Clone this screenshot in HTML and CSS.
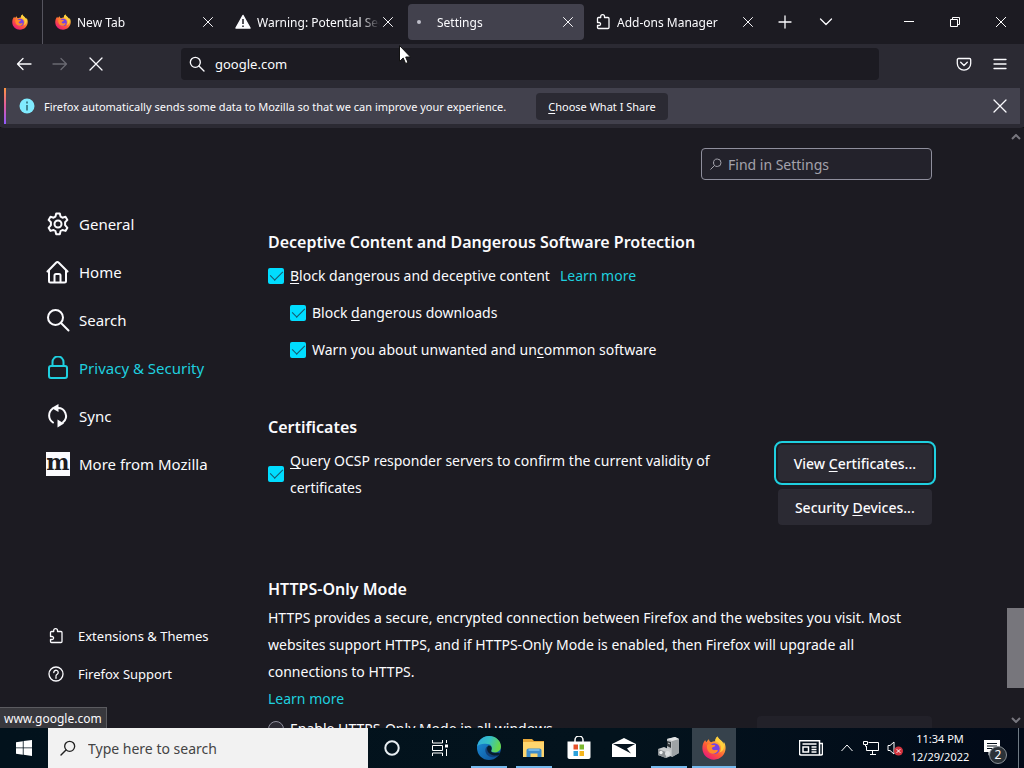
FILE: index.html
```html
<!DOCTYPE html>
<html lang="en">
<head>
    <meta charset="UTF-8">
    <title>Settings</title>
    <link rel="stylesheet" href="styles.css">
</head>
<body>
    <!-- shared icons -->
    <svg class="sprite" aria-hidden="true">
        <defs>
            <linearGradient id="fire" x1="0.85" y1="0.05" x2="0.2" y2="0.95">
                <stop offset="0" stop-color="#fff44f"/>
                <stop offset="0.3" stop-color="#ffa436"/>
                <stop offset="0.6" stop-color="#ff5a36"/>
                <stop offset="1" stop-color="#e8187c"/>
            </linearGradient>
            <linearGradient id="edgeTop" x1="0" y1="0" x2="1" y2="0.3">
                <stop offset="0" stop-color="#2fa8e0"/>
                <stop offset="0.55" stop-color="#35c1c4"/>
                <stop offset="1" stop-color="#66d64c"/>
            </linearGradient>
            <linearGradient id="edgeBottom" x1="0" y1="0" x2="1" y2="1">
                <stop offset="0" stop-color="#1c93dc"/>
                <stop offset="1" stop-color="#0c4a92"/>
            </linearGradient>
        </defs>
        <symbol id="firefox" viewBox="0 0 24 24">
            <path fill="url(#fire)" d="M15.600 .6c-1.800 1.300-2.400 3.200-2.300 4.600-1.500-.1-3 .3-4.200 1.100C8 5.800 7 4.900 7 3.300 5.800 3.900 5 5 4.700 6.100 3.900 5.700 3.400 4.900 3.300 4 1.300 6 .2 9.300.4 12.800.7 19 5.700 23.700 12 23.700c6.500 0 11.600-5.200 11.600-11.600 0-2.600-.7-4.700-1.900-6.400 0 .9-.1 1.500-.3 2-.9-3.100-4.600-4-5.800-7.100z"/>
            <circle cx="12.300" cy="12.600" r="5.400" fill="#7542e5"/>
            <path fill="#ff8a2b" d="M5.100 8.700c1.600-1 3.700-.8 5 .3h3c.4.900-.5 1.800-1.800 2.100-.8.200-1.300.8-1.400 1.500.5 1.300 1.900 1.900 3.300 1.500 1.400-.4 2.600-.2 2.900.5-1.100 2.200-3.400 3.500-5.900 3.100-3.600-.6-6-4.700-5.100-9z"/>
            <path fill="#ffcf3d" d="M15.600.6c-1.800 1.300-2.400 3.200-2.300 4.600 2.700.5 5.200 2.300 5.700 5.300.4 2.500-.3 4.700-1.700 6.300 2.800-1 4.500-3.200 4.800-6.300.2-4.100-5.300-5.500-6.500-9.900z"/>
        </symbol>
        <symbol id="close" viewBox="0 0 16 16">
            <path d="M2 2l12 12M14 2L2 14"/>
        </symbol>
        <symbol id="magnifier" viewBox="0 0 24 24">
            <circle cx="9.500" cy="9.500" r="7.500"/>
            <path d="M15 15l7.500 7.500"/>
        </symbol>
        <symbol id="puzzle" viewBox="0 0 16 16">
            <path d="M2.500 5.700V4.500c0-.6.400-1 1-1h2.200V2.600a1.900 1.900 0 0 1 3.800 0v.9H13c.6 0 1 .4 1 1v9c0 .6-.4 1-1 1H3.500c-.6 0-1-.4-1-1v-2h1.600a1.500 1.500 0 0 0 0-3H2.500z"/>
        </symbol>
    </svg>

    <header class="tab-strip">
        <button class="pinned-tab" aria-label="Firefox View"><svg class="tab-icon"><use href="#firefox"/></svg></button>
        <div class="tabs">
            <div class="tab">
                <svg class="tab-icon"><use href="#firefox"/></svg>
                <span class="tab-label">New Tab</span>
                <button class="tab-close" aria-label="Close tab"><svg class="line"><use href="#close"/></svg></button>
            </div>
            <div class="tab">
                <svg class="tab-icon" viewBox="0 0 16 16"><path d="M8 1.500L15 14H1z" fill="#fbfbfe" stroke="#fbfbfe" stroke-width="1.500" stroke-linejoin="round"/><path d="M8 5v5M8 11.500v1.500" stroke="#1c1b22" stroke-width="1.500"/></svg>
                <span class="tab-label">Warning: Potential Secu</span>
                <button class="tab-close" aria-label="Close tab"><svg class="line"><use href="#close"/></svg></button>
            </div>
            <div class="tab active">
                <svg class="tab-icon" viewBox="0 0 16 16"><circle cx="4" cy="8" r="2" fill="#bfbfc9"/></svg>
                <span class="tab-label">Settings</span>
                <button class="tab-close" aria-label="Close tab"><svg class="line"><use href="#close"/></svg></button>
            </div>
            <div class="tab">
                <svg class="tab-icon line"><use href="#puzzle"/></svg>
                <span class="tab-label">Add-ons Manager</span>
                <button class="tab-close" aria-label="Close tab"><svg class="line"><use href="#close"/></svg></button>
            </div>
        </div>
        <button class="tool" aria-label="New tab"><svg class="line" viewBox="0 0 16 16"><path d="M8 2v12M2 8h12"/></svg></button>
        <button class="tool" aria-label="List all tabs"><svg class="line" viewBox="0 0 16 16"><path d="M2.500 5L8 10.500 13.500 5"/></svg></button>
        <div class="window-controls">
            <button aria-label="Minimize"><svg class="thin" viewBox="0 0 12 12"><path d="M1 5.500h10"/></svg></button>
            <button aria-label="Restore"><svg class="thin" viewBox="0 0 12 12"><path d="M1.500 3.500h7v7h-7zM3.500 3.500v-2h7v7h-2"/></svg></button>
            <button aria-label="Close"><svg class="thin" viewBox="0 0 12 12"><path d="M1 1l10 10M11 1L1 11"/></svg></button>
        </div>
    </header>

    <nav class="nav-bar">
        <button class="tool" aria-label="Back"><svg class="line" viewBox="0 0 16 16"><path d="M15 8H2M7 2.500L1.500 8 7 13.500"/></svg></button>
        <button class="tool dim" aria-label="Forward"><svg class="line" viewBox="0 0 16 16"><path d="M1 8h13M9 2.500L14.500 8 9 13.500"/></svg></button>
        <button class="tool" aria-label="Stop"><svg class="line"><use href="#close"/></svg></button>
        <div class="url-bar">
            <svg class="line"><use href="#magnifier"/></svg>
            <input type="text" aria-label="Address" value="google.com">
        </div>
        <button class="tool" aria-label="Save to Pocket"><svg class="line" viewBox="0 0 16 16"><path d="M2.500 2.500h11c.7 0 1.200.5 1.200 1.200V7.500a6.700 6.700 0 0 1-13.400 0V3.700c0-.7.500-1.200 1.200-1.200zM4.700 6.300L8 9.500l3.300-3.200"/></svg></button>
        <button class="tool" aria-label="Menu"><svg class="line" viewBox="0 0 16 16"><path d="M2 3.500h12M2 8h12M2 12.500h12"/></svg></button>
    </nav>

    <div class="info-bar">
        <svg class="info-icon" viewBox="0 0 16 16"><circle cx="8" cy="8" r="7.500" fill="#80ebff"/><path d="M8 3.500v2M8 7v5.500" stroke="#2b6571" stroke-width="1.500"/></svg>
        <span>Firefox automatically sends some data to Mozilla so that we can improve your experience.</span>
        <button class="share"><span><u>C</u>hoose What I Share</span></button>
        <button class="tool dismiss" aria-label="Dismiss"><svg class="line"><use href="#close"/></svg></button>
    </div>

    <div class="page">
        <aside class="sidebar">
            <ul class="categories">
                <li><a href="#general">
                    <svg class="line" viewBox="0 0 24 24"><path d="M10.200 1.500h3.600l.8 3.200 1.800 1 3.100-.9 1.900 3.100-2.300 2.400v2.900l2.300 2.600-1.900 3.100-3.100-.9-1.800 1-.8 3.300h-3.600l-.8-3.300-1.800-1-3.100.9-1.900-3.100 2.300-2.600v-2.900L2.600 7.900l1.900-3.100 3.100.9 1.800-1z"/><circle cx="12" cy="12" r="3.500"/></svg>
                    General</a></li>
                <li><a href="#home">
                    <svg class="line" viewBox="0 0 24 24"><path d="M1.500 11.500L10 2.700a2 2 0 0 1 2.800 0l8.700 8.800M3 10.500V21c0 .8.700 1.500 1.500 1.500h14c.8 0 1.500-.7 1.500-1.500V10.500M8.500 22v-6.500c0-.8.700-1.500 1.500-1.500h3c.8 0 1.500.7 1.500 1.500V22"/></svg>
                    Home</a></li>
                <li><a href="#search">
                    <svg class="line"><use href="#magnifier"/></svg>
                    Search</a></li>
                <li><a class="selected" href="#privacy">
                    <svg class="line" viewBox="0 0 24 24"><rect x="3" y="10" width="18" height="12" rx="2"/><path d="M6.500 10V6a5.500 5.500 0 0 1 11 0v4"/></svg>
                    Privacy &amp; Security</a></li>
                <li><a href="#sync">
                    <svg class="line" viewBox="0 0 24 24"><path d="M6.500 4.800A8.300 8.300 0 0 0 7 18.500M11.500 4a8 8 0 0 1 5.500 14.200"/><path d="M12.500 0v8L5.500 4zM11.500 15.500v8l6.500-4z" fill="currentColor" stroke="none"/></svg>
                    Sync</a></li>
                <li><a href="#more">
                    <svg viewBox="0 0 24 24"><path fill="#fbfbfe" d="M0 0h24v24H0z"/><text class="mozilla-m" x="12" y="18" text-anchor="middle">m</text></svg>
                    More from Mozilla</a></li>
            </ul>
            <ul class="footer-links">
                <li><a href="#addons"><svg class="line"><use href="#puzzle"/></svg>Extensions &amp; Themes</a></li>
                <li><a href="#support"><svg class="line" viewBox="0 0 16 16"><circle cx="8" cy="8" r="7"/><path d="M5.800 6.500a2.200 2.200 0 1 1 3.400 1.800c-.8.500-1.200.8-1.200 1.700M8 11v1.300"/></svg>Firefox Support</a></li>
            </ul>
        </aside>

        <main class="content">
            <div class="find">
                <svg class="line"><use href="#magnifier"/></svg>
                <input type="search" aria-label="Find in Settings" placeholder="Find in Settings">
            </div>

            <section>
                <h2>Deceptive Content and Dangerous Software Protection</h2>
                <div class="option">
                    <input type="checkbox" id="block-content" checked>
                    <label for="block-content"><u>B</u>lock dangerous and deceptive content</label>
                    <a class="learn" href="#learn-deceptive">Learn more</a>
                </div>
                <div class="option indent">
                    <input type="checkbox" id="block-downloads" checked>
                    <label for="block-downloads">Block <u>d</u>angerous downloads</label>
                </div>
                <div class="option indent">
                    <input type="checkbox" id="warn-software" checked>
                    <label for="warn-software">Warn you about unwanted and un<u>c</u>ommon software</label>
                </div>
            </section>

            <section>
                <h2>Certificates</h2>
                <div class="certificates">
                    <div class="option">
                        <input type="checkbox" id="ocsp" checked>
                        <label for="ocsp"><u>Q</u>uery OCSP responder servers to confirm the current validity of certificates</label>
                    </div>
                    <div class="cert-buttons">
                        <button class="focused"><span>View <u>C</u>ertificates...</span></button>
                        <button><span>Security <u>D</u>evices...</span></button>
                    </div>
                </div>
            </section>

            <section>
                <h2>HTTPS-Only Mode</h2>
                <p>HTTPS provides a secure, encrypted connection between Firefox and the websites you visit. Most websites support HTTPS, and if HTTPS-Only Mode is enabled, then Firefox will upgrade all connections to HTTPS.</p>
                <a href="#learn-https">Learn more</a>
                <div class="https-row">
                    <div class="option">
                        <input type="radio" name="https-only" id="https-all">
                        <label for="https-all">Enable HTTPS-Only Mode in all windows</label>
                    </div>
                    <button class="exceptions" aria-label="Manage Exceptions" disabled></button>
                </div>
            </section>
        </main>

        <div class="scrollbar">
            <svg viewBox="0 0 10 6"><path d="M1 5l4-4 4 4"/></svg>
            <div class="thumb"></div>
            <svg viewBox="0 0 10 6"><path d="M1 1l4 4 4-4"/></svg>
        </div>

        <div class="status">www.google.com</div>
    </div>

    <footer class="taskbar">
        <button class="start" aria-label="Start"><svg viewBox="0 0 16 16"><path fill="#fff" d="M0 2.200l6.800-1v6.300H0zM7.600 1.100L16 0v7.500H7.600zM0 8.300h6.800v6.400L0 13.800zM7.600 8.300H16V16l-8.400-1.200z"/></svg></button>
        <div class="task-search">
            <svg class="line"><use href="#magnifier"/></svg>
            <input type="text" aria-label="Search" placeholder="Type here to search">
        </div>
        <button class="start" aria-label="Cortana"><svg viewBox="0 0 16 16"><circle cx="8" cy="8" r="6.700" fill="none" stroke="#e8eef2" stroke-width="2"/></svg></button>
        <button class="start" aria-label="Task View"><svg viewBox="0 0 16 16"><path d="M.5 0v3h10V0M.5 16v-3h10v3M.5 5.500h10v5H.5zM14.500 0v3M14.500 9v7" fill="none" stroke="#fff"/><path d="M13 4.500h3v3h-3z" fill="#fff"/></svg></button>
        <div class="apps">
            <button class="running" aria-label="Microsoft Edge">
                <svg viewBox="0 0 24 24"><circle cx="12" cy="12" r="12" fill="url(#edgeBottom)"/><path fill="url(#edgeTop)" d="M.2 10.500C1 4.500 6 0 12 0c7 0 12 5 12 10.500 0 3.600-2.900 6-6.200 6-2.600 0-4-1-3.600-1.900 1.600-2 .8-6.300-3.700-6.600C6 7.200 2 8 .2 10.500z"/><path fill="#123f79" d="M10 10.500c-2.800 2.500-2 8 2.500 10 3.500 1.400 7.500.5 10-2-4.500 1.800-11 .5-12.500-8z"/><path fill="#071d2e" d="M12 9.500c2.500 0 3.300 3 2.300 4.800-.8 1.300.8 2.700 3.800 2.400h5c-.4 1.200-1 2-1.700 2.500-4 1.200-10.300-.5-11.300-5.700-.3-1.800.4-4 1.900-4z"/></svg>
            </button>
            <button class="running" aria-label="File Explorer">
                <svg viewBox="0 0 24 24"><path fill="#e9a93a" d="M1 3h9l2 2h10v4H1z"/><path fill="#ffd66e" d="M1 6h21v15H1z"/><path fill="#3f8dcb" d="M4.500 21v-6.500c0-1.200.8-2 2-2h11c1.200 0 2 .8 2 2V21h-4v-3.500h-7V21z"/><path fill="#75b8e6" d="M6.500 13h11v2h-11z"/></svg>
            </button>
            <button aria-label="Microsoft Store">
                <svg viewBox="0 0 24 24"><path d="M8 6V4a4 4 0 0 1 8 0v2" fill="none" stroke="#fff" stroke-width="1.500"/><path fill="#fff" d="M.5 5.500h23V21c0 1.200-.8 2-2 2h-19c-1.200 0-2-.8-2-2z"/><path fill="#e5512b" d="M6.500 8.500H11v5H6.500z"/><path fill="#7cb82f" d="M12.500 8.500H17v5h-4.500z"/><path fill="#2ba1dc" d="M6.500 15H11v5H6.500z"/><path fill="#f5b51d" d="M12.500 15H17v5h-4.500z"/></svg>
            </button>
            <button aria-label="Mail">
                <svg viewBox="0 0 24 24"><path fill="#fff" d="M0 8l12-6 12 6v13H0z"/><path fill="#06141f" d="M1 8h22l-8 4.500 4 5z"/></svg>
            </button>
            <button class="running" aria-label="Tools">
                <svg viewBox="0 0 24 24"><path fill="#b9bdc0" d="M10 3l8-2 4 2v14l-7 4-5-3z"/><path fill="#9ea3a6" d="M15 5l7-2v14l-7 4z"/><path fill="#e2e4e5" d="M10 3l8-2 4 2-7 2z"/><path fill="#33383b" d="M10 5l4 1v6l-4-2z"/><path d="M11 7l2 1" stroke="#c9cccd"/><path fill="#c9cccd" d="M1 13l6-2 7 3v6l-5 2-8-3z"/><path fill="#8b9093" d="M1 13l8 3v6l-8-3z"/><circle cx="4" cy="16.500" r="1.700" fill="#eef0f0"/><circle cx="10.500" cy="17.500" r="2.500" fill="#dcdfe0"/></svg>
            </button>
            <button class="running current" aria-label="Firefox"><svg><use href="#firefox"/></svg></button>
        </div>
        <div class="tray">
            <button class="news" aria-label="News"><svg class="tray-line" viewBox="0 0 24 16"><path d="M20.500 3.500h3v10c0 .8-.7 1.500-1.500 1.500H2c-.8 0-1.500-.7-1.500-1.500V.8h20v13.500M3.500 4h14M12.500 7h5M12.500 9.500h5M12.500 12h5M4 7h5.500v5H4z" stroke-width="1.500"/></svg></button>
            <button aria-label="Show hidden icons"><svg class="tray-line" viewBox="0 0 16 16"><path d="M2.500 11L8 5l5.500 6"/></svg></button>
            <button aria-label="Network"><svg class="tray-line" viewBox="0 0 16 16"><path d="M5.500 2.500h10v8h-12V6M7 14.500h6M9.500 10.500v4M.5 1.500h4v3h-4zM2.500 4.500v2"/></svg></button>
            <button aria-label="Volume"><svg class="tray-line" viewBox="0 0 16 16"><path d="M1 5.500h2L7 2v12l-4-3.500H1z"/><circle cx="11.500" cy="11" r="4.500" fill="#d4343f" stroke="none"/><path d="M9.700 9.200l3.600 3.600M13.300 9.200l-3.600 3.600"/></svg></button>
            <div class="clock"><span>11:34 PM</span><span>12/29/2022</span></div>
            <button class="notifications" aria-label="Notifications">
                <svg viewBox="0 0 16 16"><path fill="#fff" d="M0 0h16v12H8l-3.500 3.500V12H0z"/><path d="M3 3.500h10M3 6h10M3 8.500h6" stroke="#04101b"/></svg>
                <span class="badge">2</span>
            </button>
        </div>
    </footer>

    <svg class="cursor" viewBox="0 0 12 19"><path d="M.5.5v16l3.700-3.500 2.400 5.500 2.400-1-2.300-5.500h4.800z" fill="#fff" stroke="#111"/></svg>
</body>
</html>
```

FILE: styles.css
```css
* {
    box-sizing: border-box;
}

body {
    margin: 0;
    height: 100vh;
    display: flex;
    flex-direction: column;
    overflow: hidden;
    background-color: #1c1b22;
    color: #fbfbfe;
    font-family: "Segoe UI", "Noto Sans", sans-serif;
    font-size: 14px;
}

button,
input {
    font: inherit;
    color: inherit;
}

button {
    display: flex;
    justify-content: center;
    align-items: center;
    padding: 0;
    border: none;
    background: none;
}

input {
    min-width: 0;
    padding: 0;
    border: none;
    outline: none;
    background: none;
}

a {
    color: #1fcfdf;
    text-decoration: none;
}

u {
    text-underline-offset: 2px;
}

ul {
    margin: 0;
    padding: 0;
    list-style: none;
}

svg {
    flex: none;
    width: 16px;
    height: 16px;
}

.line {
    fill: none;
    stroke: currentColor;
    stroke-width: 1.3;
    stroke-linecap: round;
    stroke-linejoin: round;
}

.thin,
.tray-line {
    fill: none;
    stroke: #fff;
}

.sprite {
    position: absolute;
    width: 0;
    height: 0;
}

/* tabs */
.tab-strip {
    display: flex;
    flex: none;
    align-items: center;
    height: 44px;
    font-size: 12px;
}

.pinned-tab {
    width: 43px;
    height: 44px;
    padding-right: 3px;
    border-right: 1px solid #55545e;
}

.tabs {
    display: flex;
    flex: 0 1 721px;
    gap: 4px;
    min-width: 0;
    margin-right: 3px;
    padding-left: 5px;
}

.tab {
    display: flex;
    flex: 1 1 0;
    align-items: center;
    gap: 6px;
    min-width: 0;
    height: 36px;
    padding: 0 10px 0 7px;
    border-radius: 4px;
}

.tab.active {
    background-color: #42414d;
}

.tab-label {
    flex: 1;
    overflow: hidden;
    white-space: nowrap;
    mask-image: linear-gradient(to left, transparent, #000 20px);
}

.tab-close {
    margin-left: -4px;
}

.tab-close svg {
    width: 12px;
    height: 12px;
}

.tool {
    width: 36px;
    height: 32px;
}

.tabs + .tool {
    margin-right: 5px;
}

.dim {
    color: #6a6972;
}

.window-controls {
    display: flex;
    margin-left: auto;
}

.window-controls button {
    width: 46px;
    height: 44px;
}

.window-controls svg {
    width: 12px;
    height: 12px;
}

/* address bar */
.nav-bar {
    display: flex;
    flex: none;
    align-items: center;
    height: 44px;
    padding: 0 6px 4px;
    background-color: #2b2a33;
}

.url-bar {
    display: flex;
    flex: 1;
    align-items: center;
    gap: 10px;
    height: 32px;
    margin: 0 67px;
    padding: 0 8px;
    border-radius: 4px;
    background-color: #1c1b22;
    font-size: 13px;
}

.url-bar .line {
    stroke-width: 2;
}

.url-bar input {
    flex: 1;
}

/* data notice */
.info-bar {
    display: flex;
    flex: none;
    align-items: center;
    height: 36px;
    padding: 0 2px 0 15px;
    border-style: solid;
    border-color: #2b2a33;
    border-width: 0 4px;
    border-radius: 4px;
    background: linear-gradient(#ff9640, #e05aa0, #9059ff) left / 2px 100% no-repeat padding-box #42414d;
    box-shadow: 0 0 0 4px #2b2a33;
    font-size: 11px;
    z-index: 1;
}

.info-icon {
    margin-right: 9px;
}

.share {
    height: 27px;
    margin-left: 30px;
    padding: 0 12px;
    border-radius: 4px;
    background-color: #2b2a33;
}

.dismiss {
    margin-left: auto;
}

/* settings page */
.page {
    position: relative;
    display: flex;
    flex: 1;
    min-height: 0;
    margin-top: 3px;
    overflow: hidden;
    border-top: 1px solid #0c0c0d;
}

.sidebar {
    display: flex;
    flex: none;
    flex-direction: column;
    justify-content: space-between;
    width: 268px;
    padding: 72px 0 35px 46px;
}

.sidebar a {
    display: flex;
    align-items: center;
    color: #fbfbfe;
}

.categories a {
    gap: 9px;
    height: 48px;
    font-size: 15px;
}

.sidebar .selected {
    color: #1fcfdf;
}

.categories svg {
    width: 24px;
    height: 24px;
}

.categories .line {
    stroke-width: 2;
}

.mozilla-m {
    fill: #1c1b22;
    font: bold 22px "DejaVu Serif", serif;
}

.footer-links a {
    gap: 14px;
    height: 38px;
    padding-left: 2px;
    font-size: 13px;
}

.content {
    flex: 0 1 664px;
    min-width: 0;
    padding-top: 20px;
    line-height: 27px;
}

.find {
    display: flex;
    align-items: center;
    gap: 6px;
    width: 231px;
    height: 32px;
    margin-left: auto;
    margin-bottom: 48px;
    padding: 0 8px;
    border: 1px solid #8f8f9d;
    border-radius: 4px;
    background-color: #23222b;
    color: #a3a2ab;
}

.find svg {
    width: 12px;
    height: 12px;
    stroke-width: 2;
    transform: scaleX(-1);
}

.find input {
    flex: 1;
}

.find input::placeholder {
    color: #a3a2ab;
}

section {
    margin-bottom: 50px;
}

h2 {
    margin: 0;
    padding: 1px 0;
    font-size: 16px;
    font-weight: 600;
}

p {
    margin: 0;
}

.option {
    display: flex;
    align-items: center;
    gap: 6px;
    padding-top: 5px;
    margin-bottom: 5px;
}

.option.indent {
    margin-left: 22px;
}

.option input {
    display: flex;
    flex: none;
    justify-content: center;
    width: 16px;
    height: 16px;
    margin: 0;
    appearance: none;
    border-radius: 2px;
}

.option input[type="checkbox"] {
    background-color: #00ddff;
}

.option input:checked::after {
    content: "";
    width: 6px;
    height: 11px;
    border: solid #15596e;
    border-width: 0 1px 1px 0;
    transform: rotate(45deg);
}

.option input[type="radio"] {
    border: 1px solid #8f8f9d;
    border-radius: 50%;
    background-color: #2b2a33;
}

.learn {
    margin-left: 4px;
}

.certificates {
    display: flex;
    align-items: flex-start;
    justify-content: space-between;
    gap: 60px;
}

.cert-buttons {
    display: flex;
    flex: none;
    flex-direction: column;
    gap: 8px;
    padding-top: 3px;
}

.cert-buttons button,
.exceptions {
    height: 36px;
    padding: 0 16px;
    border-radius: 4px;
    background-color: #2b2a33;
    font-weight: 500;
}

.cert-buttons .focused {
    outline: 2px solid #1fcfdf;
    outline-offset: 2px;
}

.https-row {
    display: flex;
    align-items: flex-start;
    justify-content: space-between;
}

.https-row .option {
    padding-top: 3px;
}

.https-row .exceptions {
    width: 175px;
    margin-top: 4px;
    background-color: #222129;
}

.scrollbar {
    display: flex;
    flex-direction: column;
    align-items: center;
    width: 17px;
    margin-left: auto;
    padding: 6px 0 5px;
}

.scrollbar svg {
    width: 10px;
    height: 6px;
    fill: none;
    stroke: #77767e;
    stroke-width: 2;
}

.thumb {
    width: 100%;
    height: 80px;
    margin-top: auto;
    margin-bottom: 29px;
    background-color: #77767c;
}

.status {
    position: absolute;
    left: 0;
    bottom: 0;
    padding: 2px 4px 1px;
    border: solid #5b5b60;
    border-width: 1px 1px 0 0;
    background-color: #38383d;
    font-size: 12px;
}

/* taskbar */
.taskbar {
    display: flex;
    flex: none;
    height: 40px;
    background: linear-gradient(to right, #02121c, #03131d 60%, #020a18);
}

.start {
    width: 48px;
}

.task-search {
    display: flex;
    flex: 0 1 320px;
    align-items: center;
    gap: 12px;
    padding: 0 12px;
    background-color: #f2f2f2;
    color: #222;
}

.task-search svg {
    stroke-width: 2;
    transform: scaleX(-1);
}

.task-search input {
    flex: 1;
}

.task-search input::placeholder {
    color: #444;
}

.apps {
    display: flex;
    gap: 1px;
    margin-left: 3px;
}

.apps button {
    width: 44px;
    background: bottom / 36px 2px no-repeat;
}

.apps svg {
    width: 24px;
    height: 24px;
}

.apps .running {
    background-image: linear-gradient(#76b9ed, #76b9ed);
}

.apps .current {
    background-color: #36424c;
    background-size: 100% 2px;
}

.tray {
    display: flex;
    align-items: center;
    margin-left: auto;
    padding-right: 5px;
}

.tray button {
    width: 24px;
    height: 40px;
}

.tray .news {
    margin-right: 12px;
}

.news svg {
    width: 24px;
}

.clock {
    display: flex;
    flex-direction: column;
    align-items: center;
    width: 66px;
    font-size: 11px;
    line-height: 18px;
}

.tray .notifications {
    position: relative;
    width: 46px;
    padding-right: 8px;
    border-right: 1px solid #6f7a84;
}

.badge {
    position: absolute;
    right: 11px;
    bottom: 4px;
    width: 18px;
    height: 18px;
    border: 1px solid #8a9096;
    border-radius: 50%;
    background-color: #2b3238;
    font-size: 12px;
    line-height: 16px;
}

.cursor {
    position: absolute;
    left: 399px;
    top: 45px;
    width: 12px;
    height: 19px;
}
```
